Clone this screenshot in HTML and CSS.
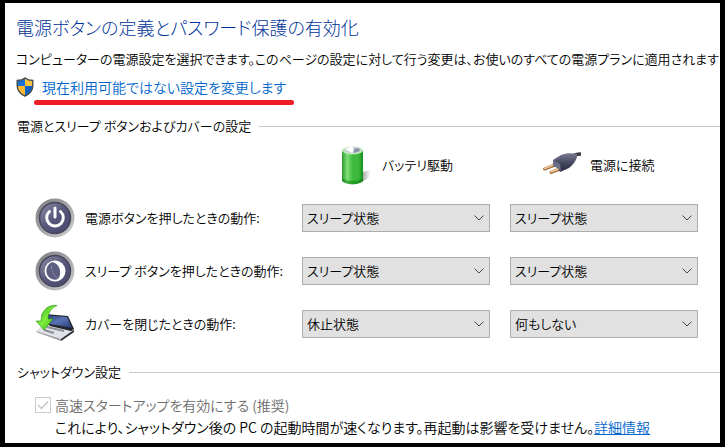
FILE: index.html
```html
<!DOCTYPE html>
<html lang="ja">
<head>
    <meta charset="UTF-8">
    <meta name="viewport" content="width=device-width, initial-scale=1.0">
    <title>電源ボタンの定義</title>
    <link rel="stylesheet" href="styles.css">
</head>
<body>
    <main>
        <h1>電源ボタンの定義とパスワード保護の有効化</h1>
        <p class="intro">コンピューターの電源設定を選択できます。このページの設定に対して行う変更は、お使いのすべての電源プランに適用されます</p>
        <div class="admin">
            <svg class="shield" viewBox="0 0 18 20" aria-hidden="true">
                <path fill="#1a6fd4" d="M9 1C6.500 3 4 3.500 1.200 3.500V9H9Z"/>
                <path fill="#fdc23e" d="M9 1c2.500 2 5 2.500 7.800 2.500V9H9Z"/>
                <path fill="#fdb933" d="M1.200 9C1.500 14 4.500 17 9 19V9Z"/>
                <path fill="#0d62c4" d="M16.800 9C16.500 14 13.500 17 9 19V9Z"/>
                <path fill="none" stroke="#4a4a4a" stroke-width="1.400" d="M9 1C6.500 3 4 3.500 1.200 3.500V8.500C1.200 13.500 4.500 17 9 19c4.500-2 7.800-5.500 7.800-10.500v-5C14 3.500 11.500 3 9 1Z"/>
            </svg>
            <a class="change" href="#">現在利用可能ではない設定を変更します</a>
        </div>

        <h2>電源とスリープ ボタンおよびカバーの設定</h2>
        <div class="settings">
            <div class="source source-battery">
                <svg class="icon" viewBox="0 0 40 40" aria-hidden="true">
                    <defs>
                        <linearGradient id="cell">
                            <stop offset="0" stop-color="#2a9a2c"/>
                            <stop offset=".25" stop-color="#7fdf78"/>
                            <stop offset=".5" stop-color="#3fbc3d"/>
                            <stop offset=".8" stop-color="#3cb63b"/>
                            <stop offset="1" stop-color="#168c1b"/>
                        </linearGradient>
                        <linearGradient id="shade">
                            <stop offset="0" stop-color="#8d8d8d"/>
                            <stop offset="1" stop-color="#fff"/>
                        </linearGradient>
                    </defs>
                    <path fill="url(#shade)" d="M28 27l7-1.500c3 1 1 6-2 8.500l-7 4Z"/>
                    <path fill="url(#cell)" d="M8 5v30.500c3 5 18 5 21 0V5Z"/>
                    <path fill="#087e12" opacity=".5" d="M8 33v2.500c3 5 18 5 21 0V33c-4 4-17 4-21 0Z"/>
                    <ellipse cx="18.500" cy="5.500" rx="10.500" ry="4" fill="#bfe8bd"/>
                    <ellipse cx="18.500" cy="5" rx="8" ry="3" fill="#c9cbd6"/>
                    <path fill="#fff" d="M11 4l7-3 2 3-2 4Z"/>
                    <path fill="#8d91ad" d="M20 4l5-1 1 3-6 2Z"/>
                </svg>
                <span>バッテリ駆動</span>
            </div>
            <div class="source">
                <svg class="icon" viewBox="0 0 40 40" aria-hidden="true">
                    <defs>
                        <linearGradient id="plug" x2="0" y2="1">
                            <stop offset="0" stop-color="#777a91"/>
                            <stop offset=".5" stop-color="#474a60"/>
                            <stop offset="1" stop-color="#24263a"/>
                        </linearGradient>
                    </defs>
                    <path fill="none" stroke="#3c4040" stroke-width="3.500" d="M29 12.500c3-3 6-3.500 10-3.500"/>
                    <path stroke="#a36d40" stroke-width="3" stroke-linecap="round" d="M2.500 24l12-4.500M9 27.500l11-4.500"/>
                    <path stroke="#efc999" stroke-width="1.500" stroke-linecap="round" d="M2.500 23.500l12-4.500M9 27l11-4.500"/>
                    <path fill="url(#plug)" d="M11 15l8-5c5-2 11-2 16-1 1 5-4 11-8 14l-9 4-2-4-5-2Z"/>
                    <path fill="#6b7088" d="M11 15l7 4 1 7.500-3-3.500-5-2Z"/>
                </svg>
                <span>電源に接続</span>
            </div>

            <div class="action">
                <svg class="icon" viewBox="0 0 40 40" aria-hidden="true">
                    <defs>
                        <linearGradient id="rim" x2="1" y2="1">
                            <stop offset="0" stop-color="#7b7b7d"/>
                            <stop offset=".5" stop-color="#a5a5a9"/>
                            <stop offset="1" stop-color="#d2d2d4"/>
                        </linearGradient>
                        <linearGradient id="face" x2="1" y2="1">
                            <stop offset="0" stop-color="#8d8da8"/>
                            <stop offset=".5" stop-color="#56567a"/>
                            <stop offset="1" stop-color="#47476c"/>
                        </linearGradient>
                    </defs>
                    <circle cx="20" cy="20" r="19.500" fill="url(#rim)"/>
                    <circle cx="20" cy="20" r="15.500" fill="url(#face)" stroke="#45455c" stroke-width="1.500"/>
                    <path fill="none" stroke="#fff" stroke-width="3" stroke-linecap="round" d="M20 10v9M14.500 13.500a8.300 8.300 0 1 0 11 0"/>
                </svg>
                <span>電源ボタンを押したときの動作:</span>
            </div>
            <select aria-label="電源ボタン (バッテリ駆動)">
                <option>何もしない</option>
                <option selected>スリープ状態</option>
                <option>休止状態</option>
            </select>
            <select aria-label="電源ボタン (電源に接続)">
                <option>何もしない</option>
                <option selected>スリープ状態</option>
                <option>休止状態</option>
            </select>

            <div class="action">
                <svg class="icon" viewBox="0 0 40 40" aria-hidden="true">
                    <circle cx="20" cy="20" r="19.500" fill="url(#rim)"/>
                    <circle cx="20" cy="20" r="15.500" fill="url(#face)" stroke="#45455c" stroke-width="1.500"/>
                    <circle cx="20" cy="20" r="10.500" fill="#fff"/>
                    <path fill="#5d5d80" d="M16 11.500c-6 4-6 12-1 15.500 3 2 6 2 8 1-5-4-7-9-7-16.500Z"/>
                    <path fill="#5d5d80" d="M16 11.500c4-1 8 3 9 8 .500 4-.500 7-2 8.500-5-4-7-9-7-16.500Z"/>
                </svg>
                <span>スリープ ボタンを押したときの動作:</span>
            </div>
            <select aria-label="スリープ ボタン (バッテリ駆動)">
                <option>何もしない</option>
                <option selected>スリープ状態</option>
                <option>休止状態</option>
            </select>
            <select aria-label="スリープ ボタン (電源に接続)">
                <option>何もしない</option>
                <option selected>スリープ状態</option>
                <option>休止状態</option>
            </select>

            <div class="action">
                <svg class="icon" viewBox="0 0 40 40" aria-hidden="true">
                    <defs>
                        <linearGradient id="lid" x2="1" y2="1">
                            <stop offset="0" stop-color="#25386d"/>
                            <stop offset=".5" stop-color="#5a73b4"/>
                            <stop offset="1" stop-color="#27396f"/>
                        </linearGradient>
                        <linearGradient id="arrow" x2="1" y2="1">
                            <stop offset="0" stop-color="#2eaa12"/>
                            <stop offset=".5" stop-color="#7fec3f"/>
                            <stop offset="1" stop-color="#29a70d"/>
                        </linearGradient>
                    </defs>
                    <path fill="#9b9ea3" d="M1 28l9-8 29 6v2L26 37Z"/>
                    <path fill="#e1e3e6" d="M1 27l9-7 27 7-11 8Z"/>
                    <path stroke="#8b8e96" stroke-width="2" d="M12 23l17 4M9 26l10 3"/>
                    <path fill="#22252c" d="M6 11l4-1 23 2 6 13-3 2-21-5Z"/>
                    <path fill="url(#lid)" d="M8 11l24 2 5 11-22-4Z"/>
                    <path fill="#30343d" d="M26 35l13-9v2L26 37Z"/>
                    <path fill="url(#arrow)" stroke="#23930d" stroke-width=".6" d="M22 1.500C13 0 6 7 6 17H1l8 9 9-11h-5c0-6 3-11 9-13.500Z"/>
                </svg>
                <span>カバーを閉じたときの動作:</span>
            </div>
            <select aria-label="カバー (バッテリ駆動)">
                <option>何もしない</option>
                <option>スリープ状態</option>
                <option selected>休止状態</option>
            </select>
            <select aria-label="カバー (電源に接続)">
                <option selected>何もしない</option>
                <option>スリープ状態</option>
                <option>休止状態</option>
            </select>
        </div>

        <h2>シャットダウン設定</h2>
        <div class="shutdown">
            <input type="checkbox" id="fast-startup" checked disabled>
            <label for="fast-startup">高速スタートアップを有効にする (推奨)</label>
            <p>これにより、シャットダウン後の PC の起動時間が速くなります。再起動は影響を受けません。<a href="#">詳細情報</a></p>
        </div>
    </main>
</body>
</html>
```
FILE: styles.css
```css
* {
    box-sizing: border-box;
}
body {
    margin: 0;
    min-height: 100vh;
    border: solid #000;
    border-width: 3px 5px 4px;
    background: #fff;
    color: #000;
    font-family: "Noto Sans CJK JP", sans-serif;
    font-size: 14px;
    font-weight: 350;
    line-height: 20px;
    font-feature-settings: "palt";
    white-space: nowrap;
    overflow: hidden;
}
main {
    overflow: hidden;
}
h1 {
    margin: 9px 0 0 11px;
    color: #003399;
    font-size: 18px;
    font-weight: 300;
    line-height: 30px;
}
h2 {
    display: flex;
    align-items: center;
    gap: 8px;
    margin: 0 0 0 12px;
    font-size: 13px;
    font-weight: 350;
}
h2::after {
    content: "";
    flex: 1;
    height: 1px;
    background: #c8c8c8;
}
p {
    margin: 0;
}
a {
    color: #0066cc;
}
.intro {
    margin: 7px 0 0 11px;
    font-size: 13px;
}
.admin {
    display: flex;
    align-items: center;
    gap: 8px;
    margin: 8px 0 19px 11px;
}
.shield {
    width: 18px;
    height: 20px;
}
.change {
    position: relative;
    text-decoration: none;
}
.change::after {
    content: "";
    position: absolute;
    left: -8px;
    right: -8px;
    top: 23px;
    height: 5px;
    border-radius: 3px;
    background: #ed1c24;
}
.settings {
    display: grid;
    grid-template-columns: 247px 1fr 1fr;
    grid-auto-rows: 40px;
    gap: 13px 20px;
    align-items: center;
    margin: 9px 22px 18px 30px;
}
.source,
.action {
    display: flex;
    align-items: center;
    gap: 10px;
    font-size: 13px;
}
.source {
    gap: 8px;
    padding-left: 32px;
}
.source-battery {
    grid-column: 2;
}
.icon {
    flex: none;
    width: 40px;
    height: 40px;
}
select {
    width: 100%;
    height: 28px;
    padding: 0 24px 0 4px;
    appearance: none;
    border: 1px solid #adadad;
    border-radius: 0;
    background: #e1e1e1 url("data:image/svg+xml,%3Csvg xmlns='http://www.w3.org/2000/svg' width='10' height='6'%3E%3Cpath d='M.5.5L5 5L9.500.5' fill='none' stroke='%23444'/%3E%3C/svg%3E") no-repeat right 5px center;
    color: #000;
    font: inherit;
    font-size: 13px;
    font-feature-settings: "palt";
}
.shutdown {
    display: grid;
    grid-template-columns: 16px 1fr;
    column-gap: 4px;
    align-items: center;
    margin: 12px 0 0 30px;
    line-height: 22px;
}
.shutdown input {
    width: 16px;
    height: 16px;
    margin: 0;
    appearance: none;
    border: 1px solid #ccc;
    background: url("data:image/svg+xml,%3Csvg xmlns='http://www.w3.org/2000/svg' width='12' height='10'%3E%3Cpath d='M1 5L4.500 8.500L11 1.500' fill='none' stroke='%23c4c4c4' stroke-width='1.500'/%3E%3C/svg%3E") no-repeat center;
}
.shutdown label {
    color: #6d6d6d;
}
.shutdown p {
    grid-column: 2;
}
```
